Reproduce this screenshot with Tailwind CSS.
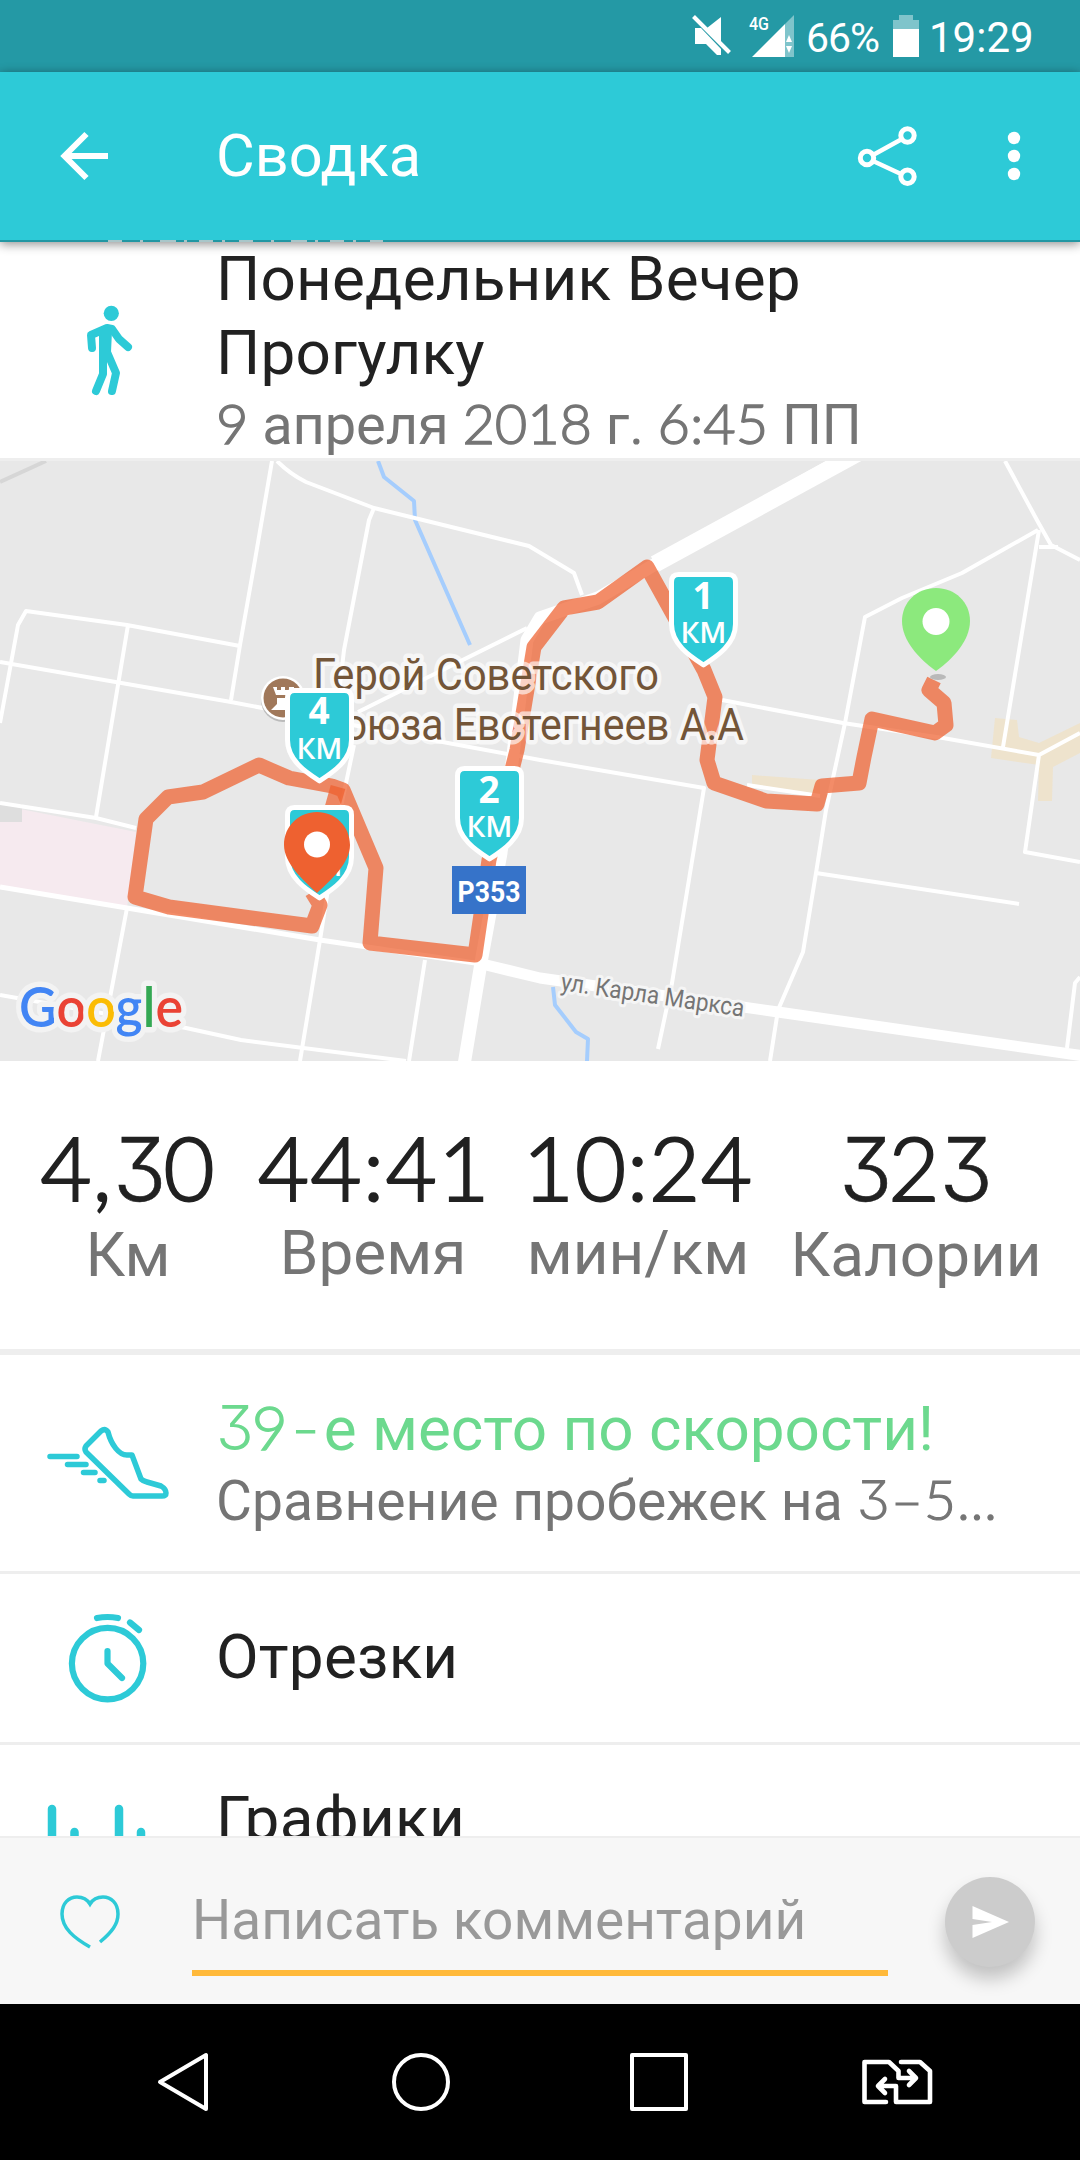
<!DOCTYPE html>
<html lang="ru">
<head>
  <meta charset="UTF-8" />
  <meta name="viewport" content="width=device-width, initial-scale=1.0" />
  <title>Сводка</title>
  <script src="https://cdn.jsdelivr.net/npm/@tailwindcss/browser@4"></script>
</head>
<body class="bg-black font-['Roboto',sans-serif]">
  <div class="w-[1080px] h-[2160px] flex flex-col overflow-hidden bg-white">

    <!-- Status bar -->
    <div class="h-[72px] shrink-0 bg-[#2499a5] text-white flex items-center">
      <svg class="w-[800px] h-[72px] shrink-0" viewBox="0 0 800 72" fill="#fff">
        <path d="M721 17V44L707 28ZM695 28H701L721 49V55H717L706 44H695Z" />
        <path d="M693.5 16.5L729.5 52.5" stroke="#fff" stroke-width="4" />
        <text x="749" y="30" font-size="18" textLength="20" lengthAdjust="spacingAndGlyphs" font-weight="500">4G</text>
        <path d="M752 57L785 24V57Z" />
        <path d="M785 24L794 15V57H785Z" fill-opacity=".42" />
        <path d="M786 42L789 35L792 42ZM786 46H792L789 53Z" />
      </svg>
      <span class="w-[86px] pl-[6px] pt-[3px] text-[41px] leading-[72px] tracking-[-1px]">66%</span>
      <svg class="w-[40px] h-[72px] shrink-0" viewBox="886 0 40 72" fill="#fff">
        <path d="M899 15H913V20H919V29H893V20H899Z" fill-opacity=".42" />
        <path d="M893 29H919V57H893Z" />
      </svg>
      <span class="pl-[3px] pt-[3px] text-[42px] leading-[72px]">19:29</span>
    </div>

    <!-- App bar -->
    <header class="relative z-10 h-[170px] shrink-0 bg-[#2dcad7] text-white flex items-center border-b-2 border-[#2197a3] shadow-[0_2px_10px_rgba(0,0,0,0.45)]">
      <svg class="w-[216px] h-[168px]" viewBox="0 72 216 168" fill="none" stroke="#fff" stroke-width="6">
        <path d="M108 156H65M86.500 134L64.500 156L86.500 178" />
      </svg>
      <h1 class="text-[59.5px] leading-[168px] grow">Сводка</h1>
      <svg class="w-[240px] h-[168px]" viewBox="840 72 240 168" fill="none" stroke="#fff">
        <g stroke-width="5">
          <circle cx="867" cy="158" r="6.700" />
          <circle cx="907.500" cy="135.500" r="6.700" />
          <circle cx="907.500" cy="176.700" r="6.700" />
        </g>
        <path d="M873 155L902 139M873 161L901 174" stroke-width="4.500" />
        <g fill="#fff" stroke="none">
          <circle cx="1014" cy="138" r="6.200" />
          <circle cx="1014" cy="156" r="6.200" />
          <circle cx="1014" cy="174" r="6.200" />
        </g>
      </svg>
      <svg class="absolute left-0 top-[168px] w-[400px] h-[2px]" viewBox="0 0 400 2">
        <path d="M108 1H383" stroke="#a9c6c9" stroke-width="2" stroke-dasharray="14 18 3 17 16 8 3 12 14 9 3 14" />
      </svg>
    </header>

    <!-- Scrolling content -->
    <main class="h-[1594px] shrink-0 overflow-hidden flex flex-col text-[#212121]">
      <section class="h-[219px] shrink-0 flex border-b-[3px] border-[#eeeeee]">
        <svg class="w-[216px] h-[216px] shrink-0" viewBox="0 242 216 216" fill="none" stroke="#2dcad7" stroke-width="8" stroke-linecap="round" stroke-linejoin="round">
          <circle cx="111.300" cy="313.300" r="7.600" fill="#2dcad7" stroke="none" />
          <path d="M92 348L91 335L107 328L112 329L119 339L128 347" />
          <path d="M103 331V354M108 331L107 352M103 352V374L96 391M107 352L116 373L112 391" />
        </svg>
        <div>
          <h2 class="text-[62px] leading-[74px] tracking-[0.2px]">Понедельник Вечер<br>Прогулку</h2>
          <p class="text-[56px] leading-[65px] tracking-[-0.1px] text-[#757575] whitespace-nowrap"><span class="font-['Lato'] font-light [-webkit-text-stroke:1.4px]">9</span> апреля <span class="font-['Lato'] font-light [-webkit-text-stroke:1.4px]">2018</span> г. <span class="font-['Lato'] font-light [-webkit-text-stroke:1.4px]">6:45</span> ПП</p>
        </div>
      </section>

      <!-- Route map -->
      <svg class="w-[1080px] h-[600px] shrink-0 bg-[#e8e8e8]" viewBox="0 461 1080 600" fill="none" stroke-linejoin="round">
        <defs>
          <g id="km">
            <path d="M-25 2.500H25Q32 2.500 32 10V52C32 72 14 84 0 93C-14 84 -32 72 -32 52V10Q-32 2.500 -25 2.500Z" fill="#2dcad7" stroke="#fff" stroke-width="5" />
            <text y="70.500" text-anchor="middle" font-family="Open Sans" font-size="28" font-weight="600" fill="#fff" textLength="46" lengthAdjust="spacingAndGlyphs">КМ</text>
          </g>
        </defs>
        <!-- areas -->
        <path d="M0 805L136 832L127 908L0 887Z" fill="#f6eaef" />
        <path d="M0 804H22V822H0Z" fill="#dedede" />
        <path d="M752 775L820 780V795L752 786ZM995 718L1017 720L1019 737L1039 743L1080 723V753L1053 767L1052 801H1038L1039 765L991 758Z" fill="#eee3cd" />
        <path d="M0 482L46 461" stroke="#d6d6d6" stroke-width="4" />
        <!-- water -->
        <path d="M378 461L384 477L414 501L415 520L470 645M553 987L555 1005L576 1032L588 1039L587 1061" stroke="#a5cdfd" stroke-width="4" />
        <!-- streets -->
        <g stroke="#fff" stroke-width="4">
          <path d="M272 461L255 560L240 645L231 700" />
          <path d="M277 461Q290 474 306 482L374 508L529 546L574 573L582 595" />
          <path d="M374 508L369 520L344 650L336 720" />
          <path d="M0 662L231 702L448 743L540 760L704 788L672 983L658 1049" />
          <path d="M240 646L127 625L26 611L18 625L0 723M128 625L96 817" />
          <path d="M358 712L527 628" />
          <path d="M0 803L96 818L136 828" />
          <path d="M354 745L341 807L320 940L300 1061M127 908L98 1061M425 960L409 1061" />
          <path d="M0 995L186 1028L241 1040L406 1061" />
          <path d="M1005 461L1038 522L1051 545L1080 560M1039 547H1058" />
          <path d="M1038 530L962 573L902 598L865 617L845 723L826 810L816 873L803 952L778 1010L770 1061" />
          <path d="M1039 530L1003 747M722 700L843 723L943 738L1039 755L1080 733M1039 755L1025 852L1080 862" />
          <path d="M816 873L1019 904M747 785L820 796M1080 977L1075 983L1067 1048" />
        </g>
        <path d="M0 887L127 908L320 940L482 964" stroke="#fff" stroke-width="5" />
        <path d="M850 455L659 562L598 598L540 618L527 640L501 853L482 957L464 1065" stroke="#fff" stroke-width="13" />
        <path d="M860 452L655 564" stroke="#fff" stroke-width="17" />
        <path d="M478 963L540 978L778 1012L1084 1056" stroke="#fff" stroke-width="11" />
        <!-- recorded track -->
        <g stroke="#ee5f2e" stroke-opacity=".72" stroke-width="15">
          <path d="M934 680L929 690L944 703L946 725L935 733L872 719L864 757L859 783L822 786L817 804L766 801L714 783L707 760L715 697L704 670L647 567L598 602L564 608L534 647L517 750L489 860L475 955L370 943L376 868L343 790L332 786L289 778L259 765L203 792L168 797L146 819L135 897L169 907L312 926L320 905L312 892" />
          <path d="M338 787L331 812" />
        </g>
        <!-- place labels -->
        <circle cx="283" cy="700" r="22" fill="#bbb" />
        <circle cx="283" cy="698" r="22" fill="#fff" />
        <circle cx="283" cy="698" r="19.500" fill="#a0785a" />
        <path d="M273 687H277V690H281V687H285V690H289V687H294V695H276ZM277 698H292V706L296 710H271L277 704Z" fill="#fff" />
        <g font-size="45" fill="#735538" stroke="#fff" stroke-opacity=".65" stroke-width="9" paint-order="stroke">
          <text x="313" y="690" textLength="346" lengthAdjust="spacingAndGlyphs">Герой Советского</text>
          <text x="317" y="740" textLength="427" lengthAdjust="spacingAndGlyphs">Союза Евстегнеев А.А</text>
        </g>
        <text transform="translate(560 990) rotate(8.3)" font-size="25" fill="#757575" stroke="#f5f5f5" stroke-width="6" paint-order="stroke" textLength="185" lengthAdjust="spacingAndGlyphs">ул. Карла Маркса</text>
        <path d="M452 866H526V914H452Z" fill="#3673c9" />
        <text x="489" y="902" text-anchor="middle" font-size="30" font-weight="700" fill="#fff" textLength="63" lengthAdjust="spacingAndGlyphs">Р353</text>
        <!-- kilometre markers -->
        <g font-family="Open Sans" font-size="37" font-weight="700" fill="#fff" text-anchor="middle">
          <use href="#km" x="703.500" y="572" />
          <text x="703" y="609">1</text>
          <use href="#km" x="489.500" y="766" />
          <text x="489" y="803">2</text>
          <use href="#km" x="319.500" y="688" />
          <text x="319" y="724">4</text>
          <use href="#km" x="319.500" y="805" />
        </g>
        <!-- start and finish pins -->
        <ellipse cx="938" cy="677" rx="8" ry="3" fill="#b9b9b9" />
        <path d="M936 588C917 588 902 602 902 621C902 640 918 658 936 671C954 658 970 640 970 621C970 602 955 588 936 588Z" fill="#8ce97d" />
        <circle cx="936" cy="621.500" r="13.500" fill="#fff" />
        <path d="M317 812C299 812 284 826 284 845C284 863 303 880 317 893C331 880 350 863 350 845C350 826 335 812 317 812Z" fill="#ee6130" />
        <circle cx="317" cy="844.500" r="13" fill="#fff" />
        <!-- provider logo -->
        <text x="19" y="1027" font-family="Lato" font-size="56" font-weight="600" textLength="164" lengthAdjust="spacingAndGlyphs" stroke="#f3f3f3" stroke-width="11" paint-order="stroke"><tspan fill="#4285f4">G</tspan><tspan fill="#ea4335">o</tspan><tspan fill="#fbbc05">o</tspan><tspan fill="#4285f4">g</tspan><tspan fill="#34a853">l</tspan><tspan fill="#ea4335">e</tspan></text>
      </svg>

      <!-- Totals -->
      <section class="h-[294px] shrink-0 flex pt-[54px] text-center border-b-[6px] border-[#eeeeee]">
        <div class="w-[256px]">
          <div class="font-['Lato'] font-light [-webkit-text-stroke:2.2px] tracking-[1px] text-[88px] leading-[104px]">4,<span class="font-['Inter'] [-webkit-text-stroke:0.6px] tracking-[-3px] [font-feature-settings:'cv09']">3</span>0</div>
          <div class="text-[62px] leading-[68px] text-[#757575]">Км</div>
        </div>
        <div class="w-[234px]">
          <div class="pl-[2px] font-['Lato'] font-light [-webkit-text-stroke:2.2px] tracking-[1.5px] text-[88px] leading-[104px]">44:41</div>
          <div class="text-[62px] leading-[68px] text-[#757575]">Время</div>
        </div>
        <div class="w-[296px]">
          <div class="font-['Lato'] font-light [-webkit-text-stroke:2.2px] tracking-[1px] text-[88px] leading-[104px]">10:24</div>
          <div class="text-[62px] leading-[68px] text-[#757575]">мин/км</div>
        </div>
        <div class="w-[260px]">
          <div class="font-['Lato'] font-light [-webkit-text-stroke:2.2px] text-[88px] leading-[104px]"><span class="font-['Inter'] [-webkit-text-stroke:0.6px] tracking-[-4px] [font-feature-settings:'cv09']">3</span>2<span class="font-['Inter'] [-webkit-text-stroke:0.6px] [font-feature-settings:'cv09']">3</span></div>
          <div class="text-[62px] leading-[68px] text-[#757575]">Калории</div>
        </div>
      </section>

      <section class="h-[219px] shrink-0 flex border-b-[3px] border-[#eeeeee]">
        <svg class="w-[216px] h-[216px] shrink-0" viewBox="0 1355 216 216" fill="none" stroke="#2dcad7" stroke-width="5.500" stroke-linecap="round" stroke-linejoin="round">
          <path d="M101 1431Q105 1428 108 1432C111 1444 119 1456 128 1455H132L141 1479Q143 1481 147 1482L161 1486Q166 1489 166 1493Q166 1496 162 1496H133Q131 1496 129 1494L86 1452Q84 1449 86 1446Z" />
          <path d="M50 1456.500H77M67.500 1464.500H86M83.500 1472.500H95M100 1480.500H104" />
        </svg>
        <div class="pt-[33px]">
          <h3 class="text-[62px] leading-[76px] text-[#6cd98e] whitespace-nowrap"><span class="font-['Inter'] font-light tracking-[-2px] [font-feature-settings:'cv09']">3</span><span class="font-['Lato'] font-light [-webkit-text-stroke:1.4px]">9</span><span class="inline-block font-['Lato'] font-light [-webkit-text-stroke:1px] w-[36px] text-center"><span class="inline-block scale-x-125">-</span></span>е место по скорости!</h3>
          <p class="text-[55.2px] leading-[64px] text-[#757575] whitespace-nowrap">Сравнение пробежек на <span class="font-['Inter'] font-light tracking-[1px] [font-feature-settings:'cv09']">3</span><span class="font-['Lato'] font-light tracking-[1px] [-webkit-text-stroke:1.2px]">–5…</span></p>
        </div>
      </section>

      <section class="h-[171px] shrink-0 flex border-b-[3px] border-[#eeeeee]">
        <svg class="w-[216px] h-[168px] shrink-0" viewBox="0 1574 216 168" fill="none" stroke="#2dcad7" stroke-width="6.200" stroke-linecap="round" stroke-linejoin="round">
          <circle cx="107.600" cy="1663.600" r="35.700" />
          <path d="M97 1618Q107.500 1616 118 1618M130 1622.500L139 1630M107.500 1651V1663.500L122 1678" />
        </svg>
        <h3 class="text-[62px] leading-[166px] tracking-[0.2px]">Отрезки</h3>
      </section>

      <section class="h-[168px] shrink-0 flex">
        <svg class="w-[216px] h-[168px] shrink-0" viewBox="0 1745 216 168" stroke="#2dcad7" stroke-width="8.500" stroke-linecap="round">
          <path d="M52 1809V1860M74.500 1832V1860M119 1809V1860M141 1832V1860" />
        </svg>
        <h3 class="text-[62px] leading-[148px] tracking-[0.3px]">Графики</h3>
      </section>
    </main>

    <!-- Comment bar -->
    <footer class="h-[168px] shrink-0 bg-[#f7f7f7] border-t-2 border-[#eeeeee] flex">
      <svg class="w-[192px] h-[166px] shrink-0" viewBox="0 1838 192 166" fill="none" stroke="#2dcad7" stroke-width="3.500">
        <path d="M100 1942C112 1932 118 1924 118 1914C118 1903 111 1897 103 1897C97 1897 93 1899 90 1904C87 1899 83 1897 77 1897C69 1897 62 1903 62 1914C62 1928 74 1938 90 1947" />
      </svg>
      <div class="w-[696px] h-[138px] border-b-[6px] border-[#ffb93a] text-[55px] leading-[164px] text-[#999999] whitespace-nowrap">Написать комментарий</div>
      <button class="ml-[57px] mt-[39px] w-[90px] h-[90px] rounded-full bg-[#cccccc] shadow-[0_12px_18px_rgba(0,0,0,0.22)]">
        <svg class="w-[90px] h-[90px]" viewBox="945 1877 90 90" fill="#fff">
          <path d="M972.500 1906L1009 1922L972.500 1938V1925L992 1922L972.500 1919Z" />
        </svg>
      </button>
    </footer>

    <!-- Navigation bar -->
    <nav class="h-[156px] shrink-0 bg-black">
      <svg class="w-[1080px] h-[156px]" viewBox="0 2004 1080 156" fill="none" stroke="#fff" stroke-width="4" stroke-linejoin="round">
        <path d="M206 2055V2109L160 2082Z" />
        <circle cx="421" cy="2082" r="27" />
        <path d="M632 2055H686V2109H632Z" />
        <g stroke-width="4.600" stroke-linecap="round">
          <path d="M886 2102H864.500V2062H889L898.500 2071V2078H915M909 2071L916 2078L909 2085" />
          <path d="M901 2062H920L930 2071V2102H896V2086H879M885 2079L878 2086L885 2093" />
        </g>
      </svg>
    </nav>
  </div>
</body>
</html>
